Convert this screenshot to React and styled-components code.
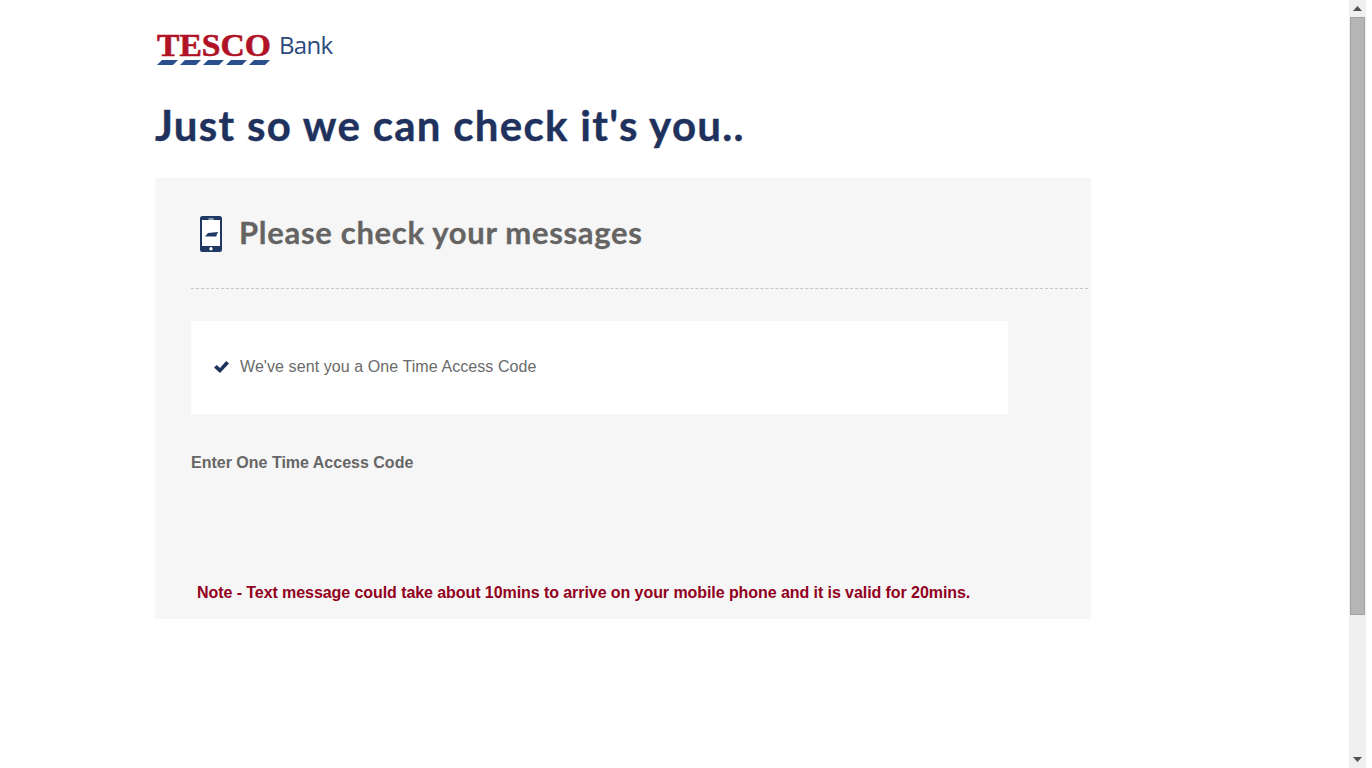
import React from "react";
import styled, { createGlobalStyle } from "styled-components";

const GlobalStyle = createGlobalStyle`
html, body {
    margin: 0;
    padding: 0;
    background: #ffffff;
    height: 100%;
    overflow: hidden;
}
`

const Page = styled.div`
display: flex;
height: 768px;
padding-right: 6px;
box-sizing: border-box;
`
const Main = styled.div`
flex: 1;
padding: 0 258px 0 155px;
`
const LogoRow = styled.div`
display: flex;
align-items: flex-start;
height: 78px;
padding: 31px 0 0 2px;
box-sizing: border-box;
`
const LogoMark = styled.div`
display: flex;
flex-direction: column;
width: 115px;
`
const LogoWord = styled.span`
font-family: "Liberation Serif", serif;
font-weight: 700;
font-size: 32px;
line-height: 28px;
height: 29px;
white-space: nowrap;
transform: scaleX(1.05);
transform-origin: left center;
-webkit-text-stroke: 0.6px #b01326;
color: #b01326;
`
const LogoBank = styled.span`
font-family: "Open Sans", sans-serif;
font-size: 24px;
line-height: 27px;
letter-spacing: -0.7px;
color: #2b4a7c;
margin-left: 7px;
`
const Title = styled.h1`
margin: 0;
height: 100px;
font-family: "Lato", sans-serif;
font-weight: 700;
font-size: 42px;
line-height: 94px;
letter-spacing: 1.3px;
-webkit-text-stroke: 0.4px #1f325e;
color: #1f325e;
`
const Panel = styled.div`
width: 936px;
height: 441px;
background: #f6f6f6;
padding: 0 3px 0 36px;
box-sizing: border-box;
`
const PanelHead = styled.div`
display: flex;
align-items: center;
gap: 17px;
height: 111px;
padding: 0 0 3px 9px;
box-sizing: border-box;
border-bottom: 1px dashed #c4c4c4;
`
const PhoneSvg = styled.svg`
margin-top: 4px;
`
const PanelTitle = styled.h2`
margin: 0;
font-family: "Lato", sans-serif;
font-weight: 700;
font-size: 31px;
letter-spacing: 0.7px;
-webkit-text-stroke: 0.3px #666462;
color: #666462;
`
const Notice = styled.div`
display: flex;
align-items: center;
gap: 11px;
width: 817px;
height: 93px;
margin-top: 32px;
padding: 0 0 2px 23px;
box-sizing: border-box;
background: #ffffff;
font-family: "Liberation Sans", sans-serif;
font-size: 16px;
letter-spacing: 0.08px;
color: #6a6a6a;
`
const CodeLabel = styled.div`
margin-top: 39px;
font-family: "Liberation Sans", sans-serif;
font-weight: 700;
font-size: 16px;
line-height: 20px;
color: #666666;
`
const Note = styled.p`
margin: 110px 0 0 6px;
font-family: "Liberation Sans", sans-serif;
font-weight: 700;
font-size: 16px;
line-height: 20px;
letter-spacing: -0.07px;
color: #920020;
`
const ScrollTrack = styled.div`
width: 17px;
display: flex;
flex-direction: column;
align-items: stretch;
background: #f0f0f0;
`
const ScrollButton = styled.div`
height: 17px;
display: flex;
align-items: center;
justify-content: center;
`
const ScrollThumb = styled.div`
height: 598px;
background: #b5b5b5;
border: 1px solid #a3a3a3;
box-sizing: border-box;
margin: 0 1px;
`
const ScrollRest = styled.div`
flex: 1;
`

const Stripes = () => (
    <svg width="115" height="5" viewBox="0 0 115 5">
        {[0, 23, 46, 69, 92].map((x) => (
            <polygon key={x} points={`${x},5 ${x + 5},0 ${x + 21},0 ${x + 16},5`} fill="#2a4f8f" />
        ))}
    </svg>
);

const PhoneIcon = () => (
    <PhoneSvg width="22" height="36" viewBox="0 0 22 36">
        <rect x="0" y="0" width="22" height="36" rx="2.5" fill="#1f3864" />
        <rect x="2" y="4" width="18" height="26" fill="#ffffff" />
        <rect x="8.5" y="2.5" width="5" height="1" fill="#ffffff" />
        <circle cx="11" cy="32.8" r="1.7" fill="#ffffff" />
        <polygon points="8,17 18,16 16,20.5 5,20.5" fill="#1f3864" />
    </PhoneSvg>
);

const CheckIcon = () => (
    <svg width="15" height="12" viewBox="0 0 15 12">
        <path d="M0 6.5 L2.8 4 L6 7 L12.2 0 L15 2.6 L6 12 Z" fill="#1f325e" />
    </svg>
);

const Arrow = ({ up }) => (
    <svg width="9" height="5" viewBox="0 0 9 5">
        <polygon points={up ? "4.5,0 9,5 0,5" : "0,0 9,0 4.5,5"} fill="#505050" />
    </svg>
);

const App = () => {
    return (
        <Page>
            <GlobalStyle />
            <Main>
                <LogoRow>
                    <LogoMark>
                        <LogoWord>TESCO</LogoWord>
                        <Stripes />
                    </LogoMark>
                    <LogoBank>Bank</LogoBank>
                </LogoRow>
                <Title>Just so we can check it's you..</Title>
                <Panel>
                    <PanelHead>
                        <PhoneIcon />
                        <PanelTitle>Please check your messages</PanelTitle>
                    </PanelHead>
                    <Notice>
                        <CheckIcon />
                        We've sent you a One Time Access Code
                    </Notice>
                    <CodeLabel>Enter One Time Access Code</CodeLabel>
                    <Note>Note - Text message could take about 10mins to arrive on your mobile phone and it is valid for 20mins.</Note>
                </Panel>
            </Main>
            <ScrollTrack>
                <ScrollButton><Arrow up /></ScrollButton>
                <ScrollThumb />
                <ScrollRest />
                <ScrollButton><Arrow /></ScrollButton>
            </ScrollTrack>
        </Page>
    );
};

export default App;
